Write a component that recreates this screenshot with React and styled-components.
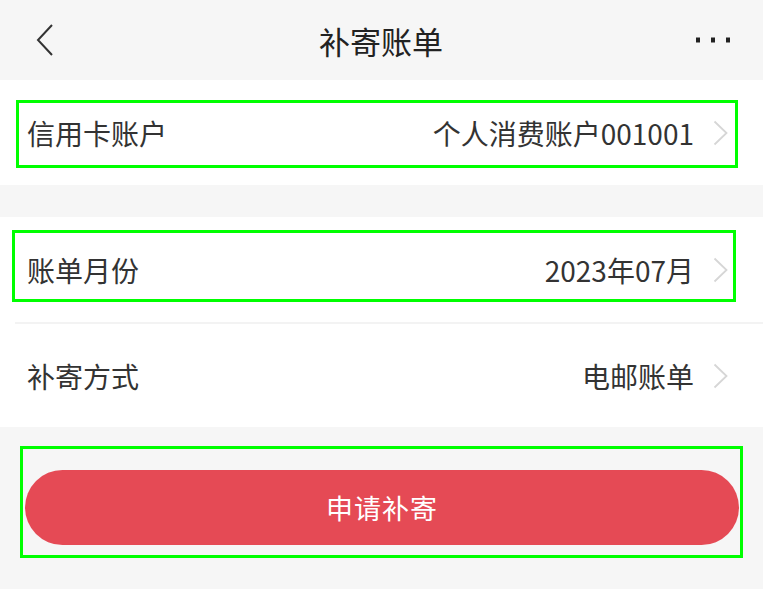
import React from 'react'
import styled, { createGlobalStyle } from 'styled-components'

const GlobalStyle = createGlobalStyle`
  html, body {
    margin: 0;
    padding: 0;
    background: #f6f6f6;
    font-family: "Noto Sans CJK SC", "Noto Sans", sans-serif;
  }
`

const Page = styled.div`
  position: relative;
  width: 763px;
  height: 589px;
  background: #f6f6f6;
  overflow: hidden;
`

const Header = styled.div`
  height: 80px;
  display: grid;
  grid-template-columns: 1fr auto 1fr;
  align-items: center;
  padding: 0 31px 0 36px;
  box-sizing: border-box;
`

const HeaderSide = styled.div`
  display: flex;
  justify-content: ${p => (p.right ? 'flex-end' : 'flex-start')};
  align-items: center;
`

const Title = styled.h1`
  margin: 0;
  font-size: 31px;
  font-weight: 400;
  color: #222;
  transform: translateX(-3px);
`

const Section = styled.div`
  background: #fff;
  margin-bottom: ${p => p.gap || 0}px;
`

const Row = styled.div`
  height: 105px;
  display: flex;
  align-items: center;
  justify-content: space-between;
  padding: 0 35px 0 27px;
  box-sizing: border-box;
  border-top: ${p => (p.divider ? '2px solid #f3f3f3' : 'none')};
  margin-left: ${p => (p.divider ? '15px' : '0')};
  padding-left: ${p => (p.divider ? '12px' : '27px')};
`

const Label = styled.span`
  font-size: 28px;
  color: #333;
`

const Value = styled.span`
  display: flex;
  align-items: center;
  gap: 19px;
  font-size: 28px;
  color: #333;
`

const Footer = styled.div`
  padding: 43px 24px 0 25px;
`

const Button = styled.button`
  width: 714px;
  height: 75px;
  border: none;
  border-radius: 38px;
  background: #e54a55;
  color: #fff;
  font-family: inherit;
  font-size: 27px;
  letter-spacing: 1px;
`

const Marker = styled.div`
  position: absolute;
  box-sizing: border-box;
  border: 3px solid #00ff00;
  pointer-events: none;
`

const Chevron = ({ color = '#d6d6d6' }) => (
  <svg width="15" height="26" viewBox="0 0 15 26">
    <path d="M1.5 1.5 L13.5 13 L1.5 24.5" fill="none" stroke={color} strokeWidth="1.8" />
  </svg>
)

const Back = () => (
  <svg width="18" height="32" viewBox="0 0 18 32">
    <path d="M16 1 L2 16 L16 31" fill="none" stroke="#333" strokeWidth="2" />
  </svg>
)

const More = () => (
  <svg width="36" height="6" viewBox="0 0 36 6">
    <rect x="0" y="0.5" width="4" height="5" fill="#222" />
    <rect x="15" y="0.5" width="4" height="5" fill="#222" />
    <rect x="30" y="0.5" width="4" height="5" fill="#222" />
  </svg>
)

export default function App() {
  return (
    <Page>
      <GlobalStyle />
      <Header>
        <HeaderSide><Back /></HeaderSide>
        <Title>补寄账单</Title>
        <HeaderSide right><More /></HeaderSide>
      </Header>

      <Section gap={32}>
        <Row>
          <Label>信用卡账户</Label>
          <Value>个人消费账户001001<Chevron /></Value>
        </Row>
      </Section>

      <Section>
        <Row>
          <Label>账单月份</Label>
          <Value>2023年07月<Chevron /></Value>
        </Row>
        <Row divider>
          <Label>补寄方式</Label>
          <Value>电邮账单<Chevron /></Value>
        </Row>
      </Section>

      <Footer>
        <Button>申请补寄</Button>
      </Footer>

      <Marker style={{ left: 16, top: 100, width: 722, height: 68 }} />
      <Marker style={{ left: 12, top: 230, width: 724, height: 72 }} />
      <Marker style={{ left: 20, top: 446, width: 723, height: 112 }} />
    </Page>
  )
}
